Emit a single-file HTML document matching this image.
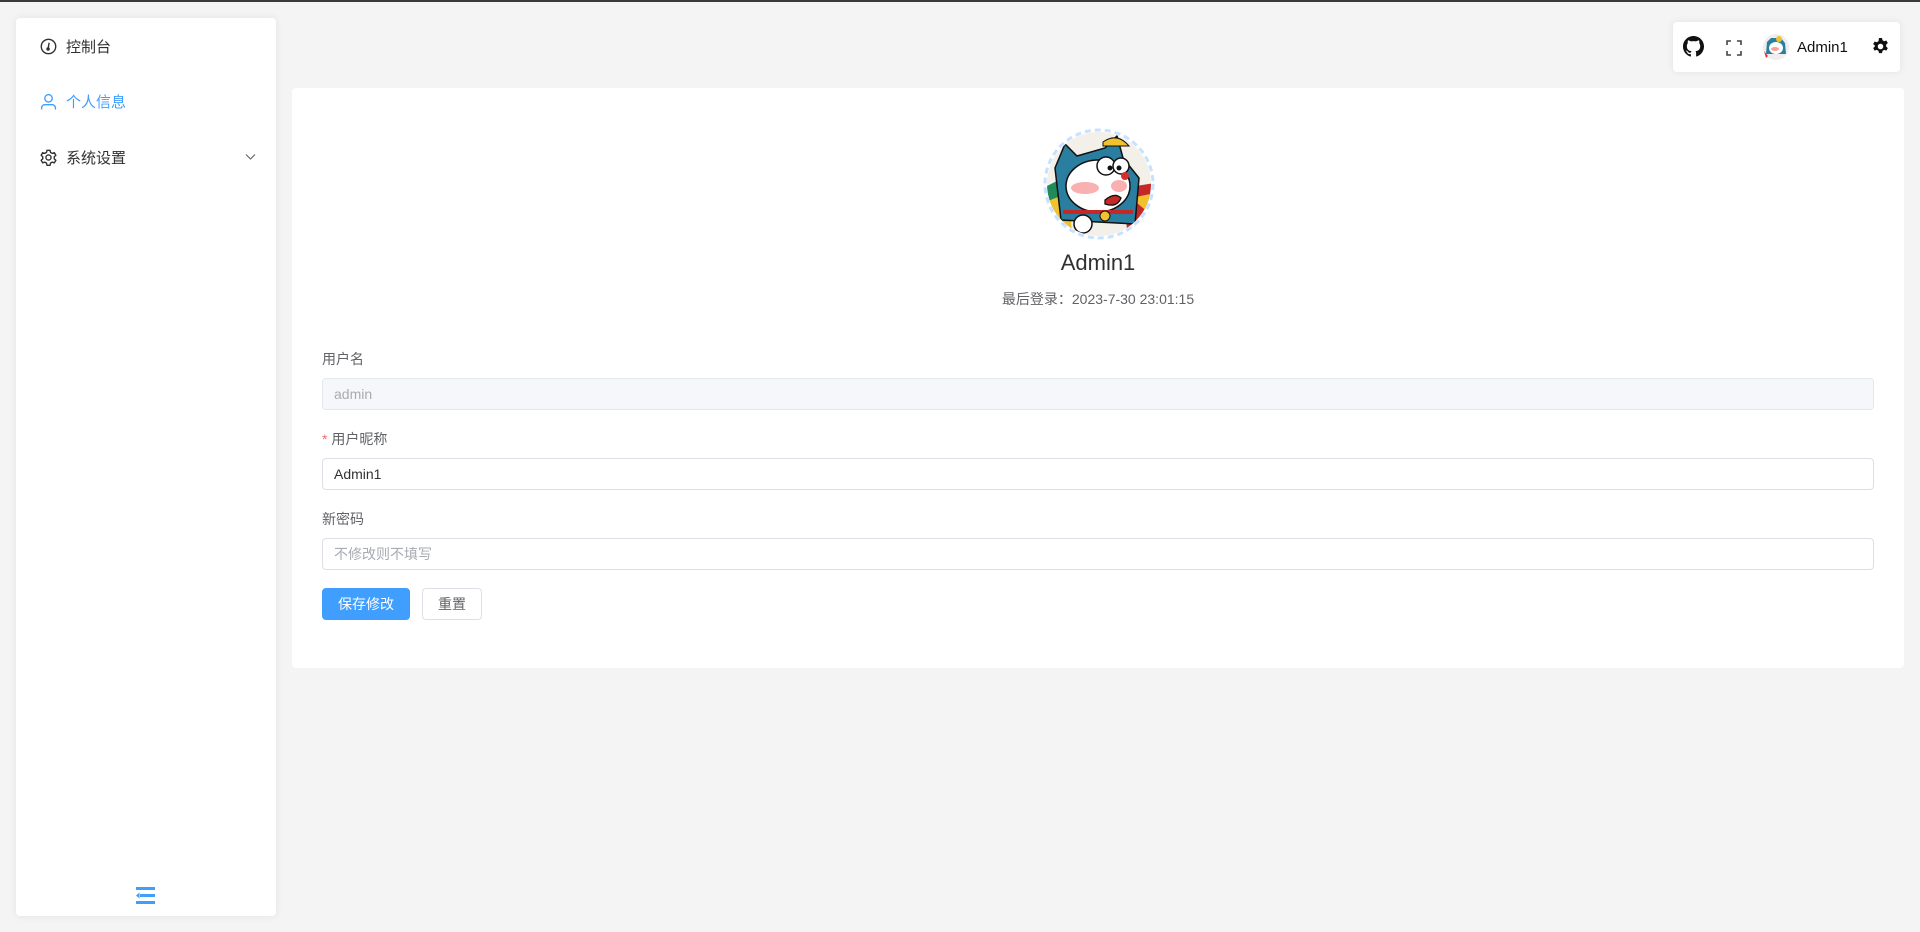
<!DOCTYPE html>
<html><head><meta charset="utf-8"><style>
*{box-sizing:border-box;margin:0;padding:0}
body{width:1920px;height:932px;background:#f4f4f4;font-family:"Liberation Sans","Noto Sans CJK SC",sans-serif;position:relative;overflow:hidden;color:#303133}
.top{position:absolute;left:0;top:0;width:1920px;height:2px;background:#3a3a3a}
.side{position:absolute;left:16px;top:18px;width:260px;height:898px;background:#fff;border-radius:4px;box-shadow:0 0 8px rgba(0,0,0,.08)}
.mi{position:absolute;left:24px;height:20px;display:flex;align-items:center;font-size:15px;color:#303133}
.mi svg{margin-right:9px}
.hdr{position:absolute;left:1673px;top:22px;width:227px;height:50px;background:#fff;border-radius:4px;box-shadow:0 0 8px rgba(0,0,0,.08)}
.card{position:absolute;left:292px;top:88px;width:1612px;height:580px;background:#fff;border-radius:4px}
.lbl{position:absolute;left:30px;font-size:14px;color:#606266}
.inp{position:absolute;left:30px;width:1552px;height:32px;border:1px solid #dcdfe6;border-radius:4px;font-size:14px;padding-left:11px;line-height:30px;color:#606266}
.btn{position:absolute;top:500px;height:32px;border-radius:4px;font-size:14px;text-align:center;line-height:30px}
</style></head><body>
<div class="top"></div>
<div class="side">
 <div class="mi" style="top:18px"><svg width="17" height="17" viewBox="0 0 16 16" fill="none" stroke="#303133" stroke-width="1.3"><circle cx="8" cy="8" r="6.8"/><path d="M8.6 4.5 7.7 9.5"/><circle cx="7.6" cy="10.3" r="1" fill="#303133"/></svg>控制台</div>
 <div class="mi" style="top:73px;color:#409eff"><svg width="17" height="17" viewBox="0 0 16 16" fill="none" stroke="#409eff" stroke-width="1.3"><circle cx="8" cy="5" r="3.5"/><path d="M1.5 15.5v-1.5a3 3 0 0 1 3-3h7a3 3 0 0 1 3 3v1.5"/></svg>个人信息</div>
 <div class="mi" style="top:129px"><svg width="17" height="17" viewBox="0 0 16 16" fill="none" stroke="#303133" stroke-width="1.3"><circle cx="8" cy="8" r="2.4"/><path d="M6.6 1.2h2.8l.5 2 1.6.9 2-.6 1.4 2.4-1.5 1.4v1.9l1.5 1.4-1.4 2.4-2-.6-1.6.9-.5 2H6.6l-.5-2-1.6-.9-2 .6-1.4-2.4 1.5-1.4V7.3L1.1 5.9l1.4-2.4 2 .6 1.6-.9z"/></svg>系统设置</div>
 <svg style="position:absolute;left:229px;top:135px" width="11" height="8" viewBox="0 0 11 8" fill="none" stroke="#606266" stroke-width="1.1"><path d="M1 1.5l4.5 4.5 4.5-4.5"/></svg>
 <svg style="position:absolute;left:120px;top:869px" width="19" height="17" viewBox="0 0 19 17" fill="#409eff"><rect x="0" y="0" width="19" height="3"/><rect x="4" y="7" width="15" height="3"/><rect x="0" y="14" width="19" height="3"/><path d="M0 8.5 3.5 5.5v6z"/></svg>
</div>
<div class="hdr">
 <svg style="position:absolute;left:10px;top:14px" width="21" height="21" viewBox="0 0 16 16" fill="#111"><path d="M8 0C3.58 0 0 3.58 0 8c0 3.54 2.29 6.530 5.47 7.59.4.07.55-.17.55-.38 0-.19-.01-.82-.01-1.49-2.01.37-2.53-.49-2.690-.94-.09-.23-.48-.94-.82-1.13-.28-.15-.68-.52-.01-.53.63-.01 1.08.58 1.23.82.72 1.21 1.87.87 2.33.66.07-.52.28-.87.51-1.07-1.78-.2-3.64-.89-3.64-3.95 0-.87.31-1.590.82-2.15-.08-.2-.36-1.02.08-2.12 0 0 .67-.21 2.2.82.64-.18 1.32-.27 2-.27.68 0 1.36.09 2 .27 1.53-1.04 2.2-.82 2.2-.82.44 1.1.16 1.92.08 2.12.51.56.82 1.27.82 2.15 0 3.07-1.87 3.75-3.65 3.95.29.25.54.73.54 1.48 0 1.07-.01 1.93-.01 2.2 0 .21.15.46.55.38A8.01 8.01 0 0 0 16 8c0-4.42-3.58-8-8-8z"/></svg>
 <svg style="position:absolute;left:53px;top:18px" width="16" height="16" viewBox="0 0 16 16" fill="none" stroke="#444" stroke-width="1.6"><path d="M1 5V1h4M11 1h4v4M15 11v4h-4M5 15H1v-4"/></svg>
 <svg style="position:absolute;left:90px;top:12px" width="26" height="26" viewBox="0 0 26 26"><circle cx="13" cy="13" r="13" fill="#eee"/><path d="M3 20 4 8 8 4 18 4 22 9 23 20z" fill="#2a7fa0"/><ellipse cx="13" cy="14" rx="7" ry="6" fill="#fff"/><ellipse cx="12" cy="15" rx="4" ry="2" fill="#f6a0a0"/><circle cx="16" cy="5" r="3" fill="#f2c12e"/><path d="M1 17 5 22 3 24z" fill="#d33"/></svg>
 <div style="position:absolute;left:124px;top:17px;font-size:15px;color:#111">Admin1</div>
 <svg style="position:absolute;left:199px;top:16px" width="17" height="17" viewBox="0 0 16 16"><path fill="#111" fill-rule="evenodd" d="M6.6 0h2.8l.5 2.1 1.6.9 2-.7 1.4 2.4-1.6 1.5v1.8l1.6 1.5-1.4 2.4-2-.7-1.6.9-.5 2.1H6.6l-.5-2.1-1.6-.9-2 .7-1.4-2.4 1.6-1.5V7.1L1.1 5.7l1.4-2.4 2 .7 1.6-.9zM8 5.4a2.6 2.6 0 1 0 0 5.2 2.6 2.6 0 0 0 0-5.2z"/></svg>
</div>
<div class="card">
 <svg style="position:absolute;left:751px;top:40px" width="112" height="112" viewBox="0 0 112 112">
  <defs><clipPath id="c"><circle cx="56" cy="56" r="52"/></clipPath></defs>
  <g clip-path="url(#c)"><rect width="112" height="112" fill="#f3efe9"/>
  <path d="M0 60 20 50 30 112 0 112z" fill="#1f8a5a"/><path d="M0 75 25 65 30 112 0 112z" fill="#f2c12e"/><path d="M80 60 112 55 112 112 85 112z" fill="#c62828"/><path d="M88 70 112 65 112 90z" fill="#f2c12e"/>
  <path d="M18 92 12 40 22 16 34 28 62 20 74 8 80 30 96 50 92 96z" fill="#2a7fa0" stroke="#111" stroke-width="1.5"/>
  <ellipse cx="55" cy="58" rx="32" ry="26" fill="#fff" stroke="#111" stroke-width="1.5"/>
  <ellipse cx="42" cy="60" rx="14" ry="6" fill="#f8b0b0"/><ellipse cx="76" cy="58" rx="8" ry="6" fill="#f8b0b0"/>
  <circle cx="63" cy="38" r="9" fill="#fff" stroke="#111" stroke-width="1.5"/><circle cx="78" cy="38" r="8" fill="#fff" stroke="#111" stroke-width="1.5"/><circle cx="67" cy="40" r="2.5" fill="#111"/><circle cx="76" cy="40" r="2.5" fill="#111"/>
  <circle cx="82" cy="48" r="4" fill="#d32f2f"/>
  <path d="M62 72q10-8 16-2q-4 10-16 6z" fill="#c62828" stroke="#111" stroke-width="1.3"/>
  <path d="M60 14q14-10 26 4l-26 0z" fill="#f2c12e" stroke="#111" stroke-width="1"/>
  <rect x="20" y="82" width="70" height="4" fill="#c62828"/><circle cx="62" cy="88" r="5" fill="#f2c12e" stroke="#111"/>
  <circle cx="40" cy="96" r="9" fill="#fff" stroke="#111" stroke-width="1.5"/></g>
  <circle cx="56" cy="56" r="54" fill="none" stroke="#c6e2ff" stroke-width="3" stroke-dasharray="6 4"/>
 </svg>
 <div style="position:absolute;left:0;width:1612px;top:162px;text-align:center;font-size:22px;color:#303133">Admin1</div>
 <div style="position:absolute;left:0;width:1612px;top:201px;text-align:center;font-size:14px;color:#606266">最后登录：2023-7-30 23:01:15</div>
 <div class="lbl" style="top:261px">用户名</div>
 <div class="inp" style="top:290px;background:#f5f7fa;border-color:#e4e7ed;color:#a8abb2">admin</div>
 <div class="lbl" style="top:341px"><span style="color:#f56c6c">*</span> 用户昵称</div>
 <div class="inp" style="top:370px;color:#303133">Admin1</div>
 <div class="lbl" style="top:421px">新密码</div>
 <div class="inp" style="top:450px;color:#a8abb2">不修改则不填写</div>
 <div class="btn" style="left:30px;width:88px;background:#409eff;color:#fff;border:1px solid #409eff">保存修改</div>
 <div class="btn" style="left:130px;width:60px;border:1px solid #dcdfe6;color:#606266">重置</div>
</div>
</body></html>
